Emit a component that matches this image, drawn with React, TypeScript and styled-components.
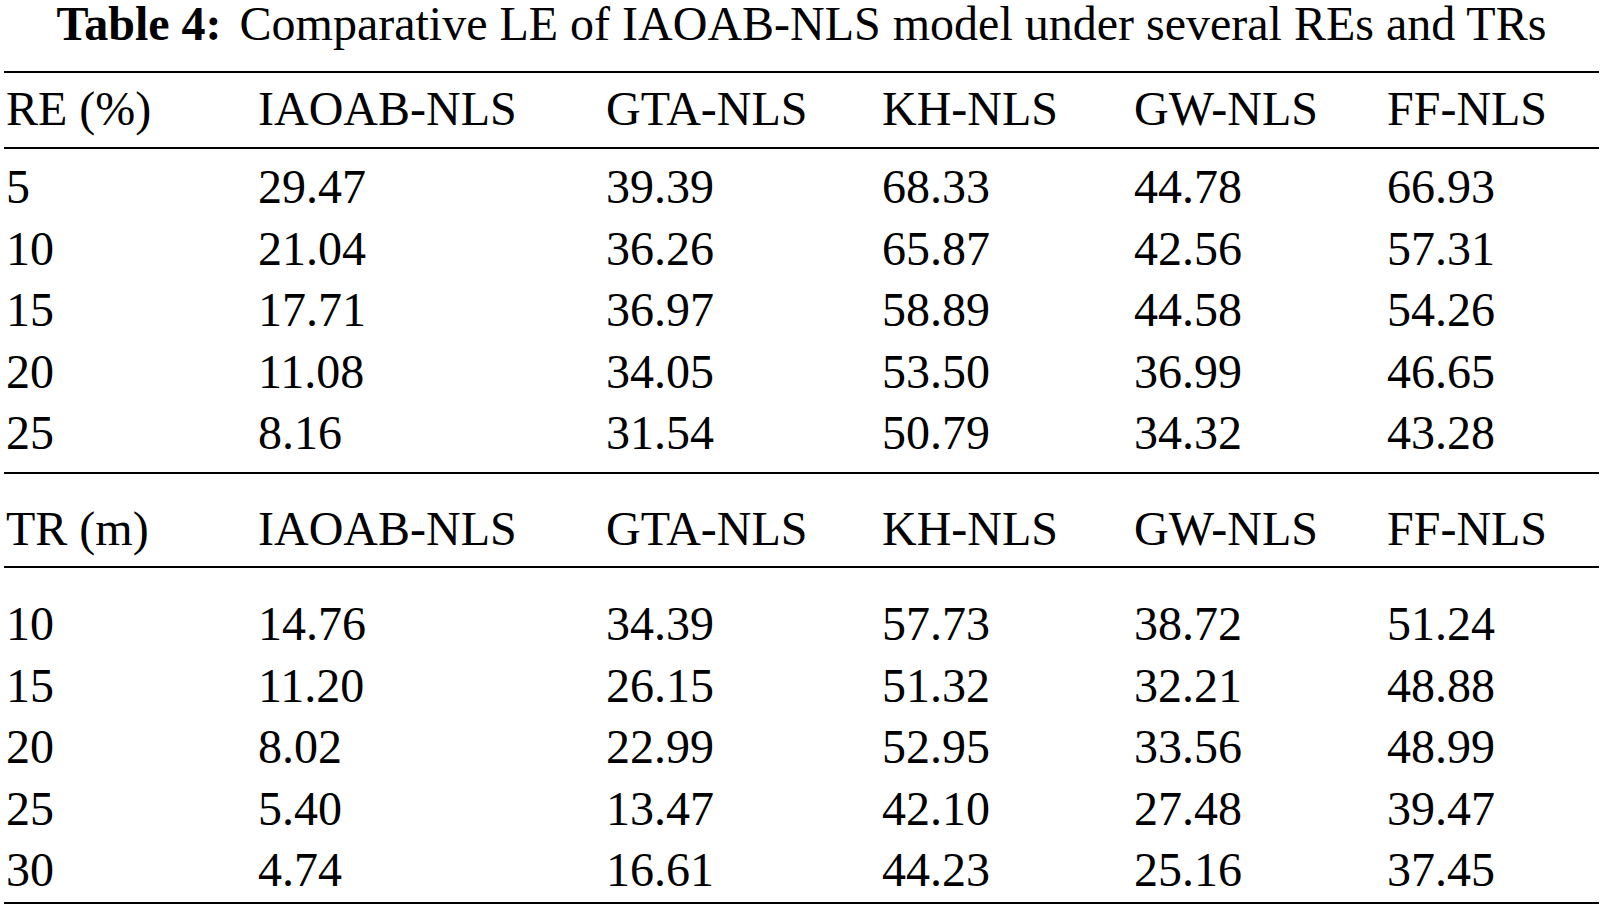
import React from "react";
import styled, { createGlobalStyle } from "styled-components";

const GlobalStyle = createGlobalStyle`
  html, body {
    margin: 0;
    padding: 0;
    background: #ffffff;
  }
  body {
    font-family: "Liberation Serif", "Times New Roman", serif;
    color: #000000;
  }
`;

const Page = styled.div`
  width: 1604px;
  height: 908px;
  overflow: hidden;
  padding: 0 5px 0 4px;
  box-sizing: border-box;
`;

const Caption = styled.div`
  font-size: 48px;
  line-height: 47px;
  text-align: center;
  white-space: nowrap;
  margin-bottom: 24px;
`;

const CaptionLabel = styled.b`
  font-weight: 700;
  margin-right: 6px;
`;

const Table = styled.div`
  border-top: 2px solid #000;
  border-bottom: 2px solid #000;
`;

const Section = styled.div<{ $top: number; $bottom: number; $rule?: boolean }>`
  padding: ${(p) => p.$top}px 0 ${(p) => p.$bottom}px;
  border-bottom: ${(p) => (p.$rule ? "2px solid #000" : "none")};
`;

const Row = styled.div<{ $pitch: number }>`
  display: grid;
  grid-template-columns: 254px 348px 276px 252px 253px 1fr;
  font-size: 48px;
  line-height: ${(p) => p.$pitch}px;
  white-space: nowrap;
`;

const Cell = styled.div<{ $first?: boolean }>`
  padding-left: ${(p) => (p.$first ? "2px" : "0")};
`;

const methods = ["IAOAB-NLS", "GTA-NLS", "KH-NLS", "GW-NLS", "FF-NLS"];

const reRows: string[][] = [
  ["5", "29.47", "39.39", "68.33", "44.78", "66.93"],
  ["10", "21.04", "36.26", "65.87", "42.56", "57.31"],
  ["15", "17.71", "36.97", "58.89", "44.58", "54.26"],
  ["20", "11.08", "34.05", "53.50", "36.99", "46.65"],
  ["25", "8.16", "31.54", "50.79", "34.32", "43.28"],
];

const trRows: string[][] = [
  ["10", "14.76", "34.39", "57.73", "38.72", "51.24"],
  ["15", "11.20", "26.15", "51.32", "32.21", "48.88"],
  ["20", "8.02", "22.99", "52.95", "33.56", "48.99"],
  ["25", "5.40", "13.47", "42.10", "27.48", "39.47"],
  ["30", "4.74", "16.61", "44.23", "25.16", "37.45"],
];

function DataRow({ cells, pitch }: { cells: string[]; pitch: number }) {
  return (
    <Row $pitch={pitch}>
      {cells.map((c, i) => (
        <Cell key={i} $first={i === 0}>
          {c}
        </Cell>
      ))}
    </Row>
  );
}

export default function App() {
  return (
    <Page>
      <GlobalStyle />
      <Caption>
        <CaptionLabel>Table 4:</CaptionLabel> Comparative LE of IAOAB-NLS model under several REs and TRs
      </Caption>
      <Table>
        <Section $top={5} $bottom={8} $rule>
          <DataRow cells={["RE (%)", ...methods]} pitch={61} />
        </Section>
        <Section $top={7} $bottom={8} $rule>
          {reRows.map((r) => (
            <DataRow key={r[0]} cells={r} pitch={61.5} />
          ))}
        </Section>
        <Section $top={24.5} $bottom={7} $rule>
          <DataRow cells={["TR (m)", ...methods]} pitch={61} />
        </Section>
        <Section $top={25} $bottom={1.5}>
          {trRows.map((r) => (
            <DataRow key={r[0]} cells={r} pitch={61.5} />
          ))}
        </Section>
      </Table>
    </Page>
  );
}
